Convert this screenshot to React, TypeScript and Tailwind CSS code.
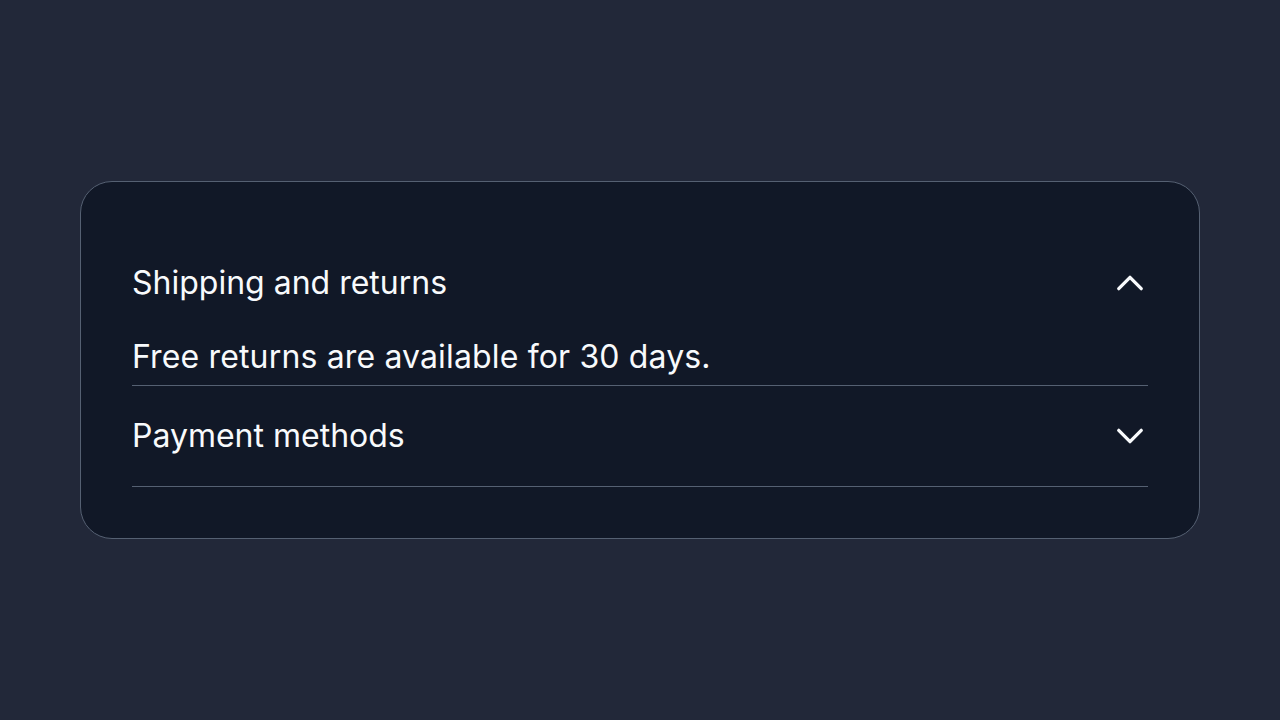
import { useState } from "react";

type Item = { id: string; title: string; body: string };

const items: Item[] = [
  { id: "shipping", title: "Shipping and returns", body: "Free returns are available for 30 days." },
  { id: "payment", title: "Payment methods", body: "We accept all major credit cards and PayPal." },
];

function Chevron({ open }: { open: boolean }) {
  return (
    <svg
      viewBox="0 0 24 24"
      fill="none"
      stroke="currentColor"
      strokeWidth={2.2}
      strokeLinecap="round"
      strokeLinejoin="round"
      className="h-9 w-9 shrink-0"
      aria-hidden="true"
    >
      {open ? <path d="m4.5 15.75 7.5-7.5 7.5 7.5" /> : <path d="m19.5 8.25-7.5 7.5-7.5-7.5" />}
    </svg>
  );
}

export default function App() {
  const [openId, setOpenId] = useState<string | null>("shipping");

  return (
    <div
      className="flex min-h-screen items-center justify-center bg-[#222839] text-[#f8fafc]"
      style={{ fontFamily: "Inter, 'Noto Sans', sans-serif" }}
    >
      <div className="w-[1120px] rounded-[32px] border border-[#556072] bg-[#111827] p-[51px]">
        {items.map((item) => {
          const open = openId === item.id;
          return (
            <div key={item.id} className="border-b border-[#556072]">
              <button
                type="button"
                onClick={() => setOpenId(open ? null : item.id)}
                className="flex w-full items-center justify-between py-8 text-left text-[32px] leading-9"
              >
                <span>{item.title}</span>
                <Chevron open={open} />
              </button>
              {open && (
                <div className="pt-[6px] pb-[10px] text-[32px] leading-9 tracking-[0.15px]">{item.body}</div>
              )}
            </div>
          );
        })}
      </div>
    </div>
  );
}
